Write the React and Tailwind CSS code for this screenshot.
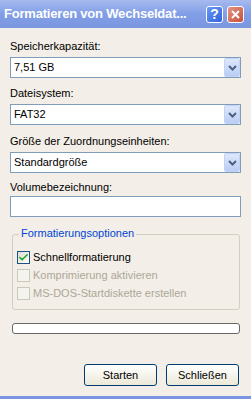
import { Check } from 'lucide-react';

const font = { fontFamily: '"Liberation Sans", Arial, sans-serif' };

const DropArrow = () => (
  <div className="w-[16px] h-[19px] rounded-[2px] bg-gradient-to-b from-[#dfe8fb] to-[#b9cdf5] border border-[#c3d3f5] flex items-center justify-center">
    <svg width="9" height="6" viewBox="0 0 9 6">
      <path d="M1 1 L4.5 4.5 L8 1" stroke="#4d6185" strokeWidth="2" fill="none" />
    </svg>
  </div>
);

const Select = ({ value }) => (
  <div className="h-[21px] bg-white border border-[#7f9db9] flex items-center">
    <span className="flex-1 pl-[3px] text-[11px] text-black leading-[13px]">{value}</span>
    <DropArrow />
  </div>
);

const Label = ({ children, className = 'mb-[4px]' }) => (
  <div className={`text-[11px] leading-[13px] text-black ${className}`}>{children}</div>
);

const Checkbox = ({ checked, disabled, label }) => (
  <div className="flex items-center gap-[3px] h-[18px]">
    <div
      className={`w-[13px] h-[13px] border flex items-center justify-center ${
        disabled ? 'border-[#cac8bb] bg-[#f4f3ee]' : 'border-[#1c5180] bg-gradient-to-br from-[#dcdcd7] to-white'
      }`}
    >
      {checked && <Check size={11} strokeWidth={3.5} className="text-[#21a121]" />}
    </div>
    <span className={`text-[11px] leading-[13px] ${disabled ? 'text-[#aca899]' : 'text-black'}`}>{label}</span>
  </div>
);

const Button = ({ children }) => (
  <button className="w-[73px] h-[22px] rounded-[3px] border border-[#003c74] bg-gradient-to-b from-white to-[#ece9d8] text-[11px] text-black">
    {children}
  </button>
);

export default function App() {
  return (
    <div className="w-[251px] h-[399px] bg-[#f3eee7] flex flex-col" style={font}>
      {/* Title bar */}
      <div className="h-[28px] shrink-0 bg-gradient-to-b from-[#a6baee] via-[#819ee6] to-[#7a97e0] flex items-center pl-[4px] pr-[7px]">
        <span className="flex-1 min-w-0 whitespace-nowrap overflow-hidden text-white font-bold text-[13px] tracking-[-0.2px]">
          Formatieren von Wechseldat...
        </span>
        <div className="flex gap-[4px] shrink-0">
          <div className="w-[17px] h-[17px] rounded-[3px] border border-white bg-gradient-to-br from-[#6b97f5] to-[#2f62db] flex items-center justify-center text-white font-bold text-[14px] leading-none">
            ?
          </div>
          <div className="w-[17px] h-[17px] rounded-[3px] border border-white bg-gradient-to-br from-[#e39382] to-[#c4503c] flex items-center justify-center">
            <svg width="9" height="9" viewBox="0 0 9 9">
              <path d="M1 1 L8 8 M8 1 L1 8" stroke="white" strokeWidth="2" />
            </svg>
          </div>
        </div>
      </div>

      {/* Body */}
      <div className="flex-1 flex flex-col px-[10px] pt-[12px] border-b-[3px] border-[#7b96e0]">
        <Label>Speicherkapazität:</Label>
        <Select value="7,51 GB" />
        <div className="h-[9px] shrink-0" />
        <Label>Dateisystem:</Label>
        <Select value="FAT32" />
        <div className="h-[10px] shrink-0" />
        <Label>Größe der Zuordnungseinheiten:</Label>
        <Select value="Standardgröße" />
        <div className="h-[8px] shrink-0" />
        <Label className="mb-[2px]">Volumebezeichnung:</Label>
        <div className="h-[21px] shrink-0 bg-white border border-[#7f9db9]" />

        {/* Group box */}
        <div className="relative mt-[17px] ml-[2px] mr-[1px] h-[76px] shrink-0 border border-[#d0d0bf] rounded-[3px] pl-[4px] pt-[13px]">
          <span className="absolute -top-[8px] left-[6px] px-[2px] bg-[#f3eee7] text-[11px] leading-[13px] text-[#0046d5]">
            Formatierungsoptionen
          </span>
          <Checkbox checked label="Schnellformatierung" />
          <Checkbox disabled label="Komprimierung aktivieren" />
          <Checkbox disabled label="MS-DOS-Startdiskette erstellen" />
        </div>

        <div className="mt-[13px] ml-[2px] mr-[1px] h-[11px] shrink-0 rounded-[3px] border border-[#686868] bg-white" />

        <div className="flex justify-end gap-[9px] mt-[30px] pr-[2px]">
          <Button>Starten</Button>
          <Button>Schließen</Button>
        </div>
      </div>
    </div>
  );
}
